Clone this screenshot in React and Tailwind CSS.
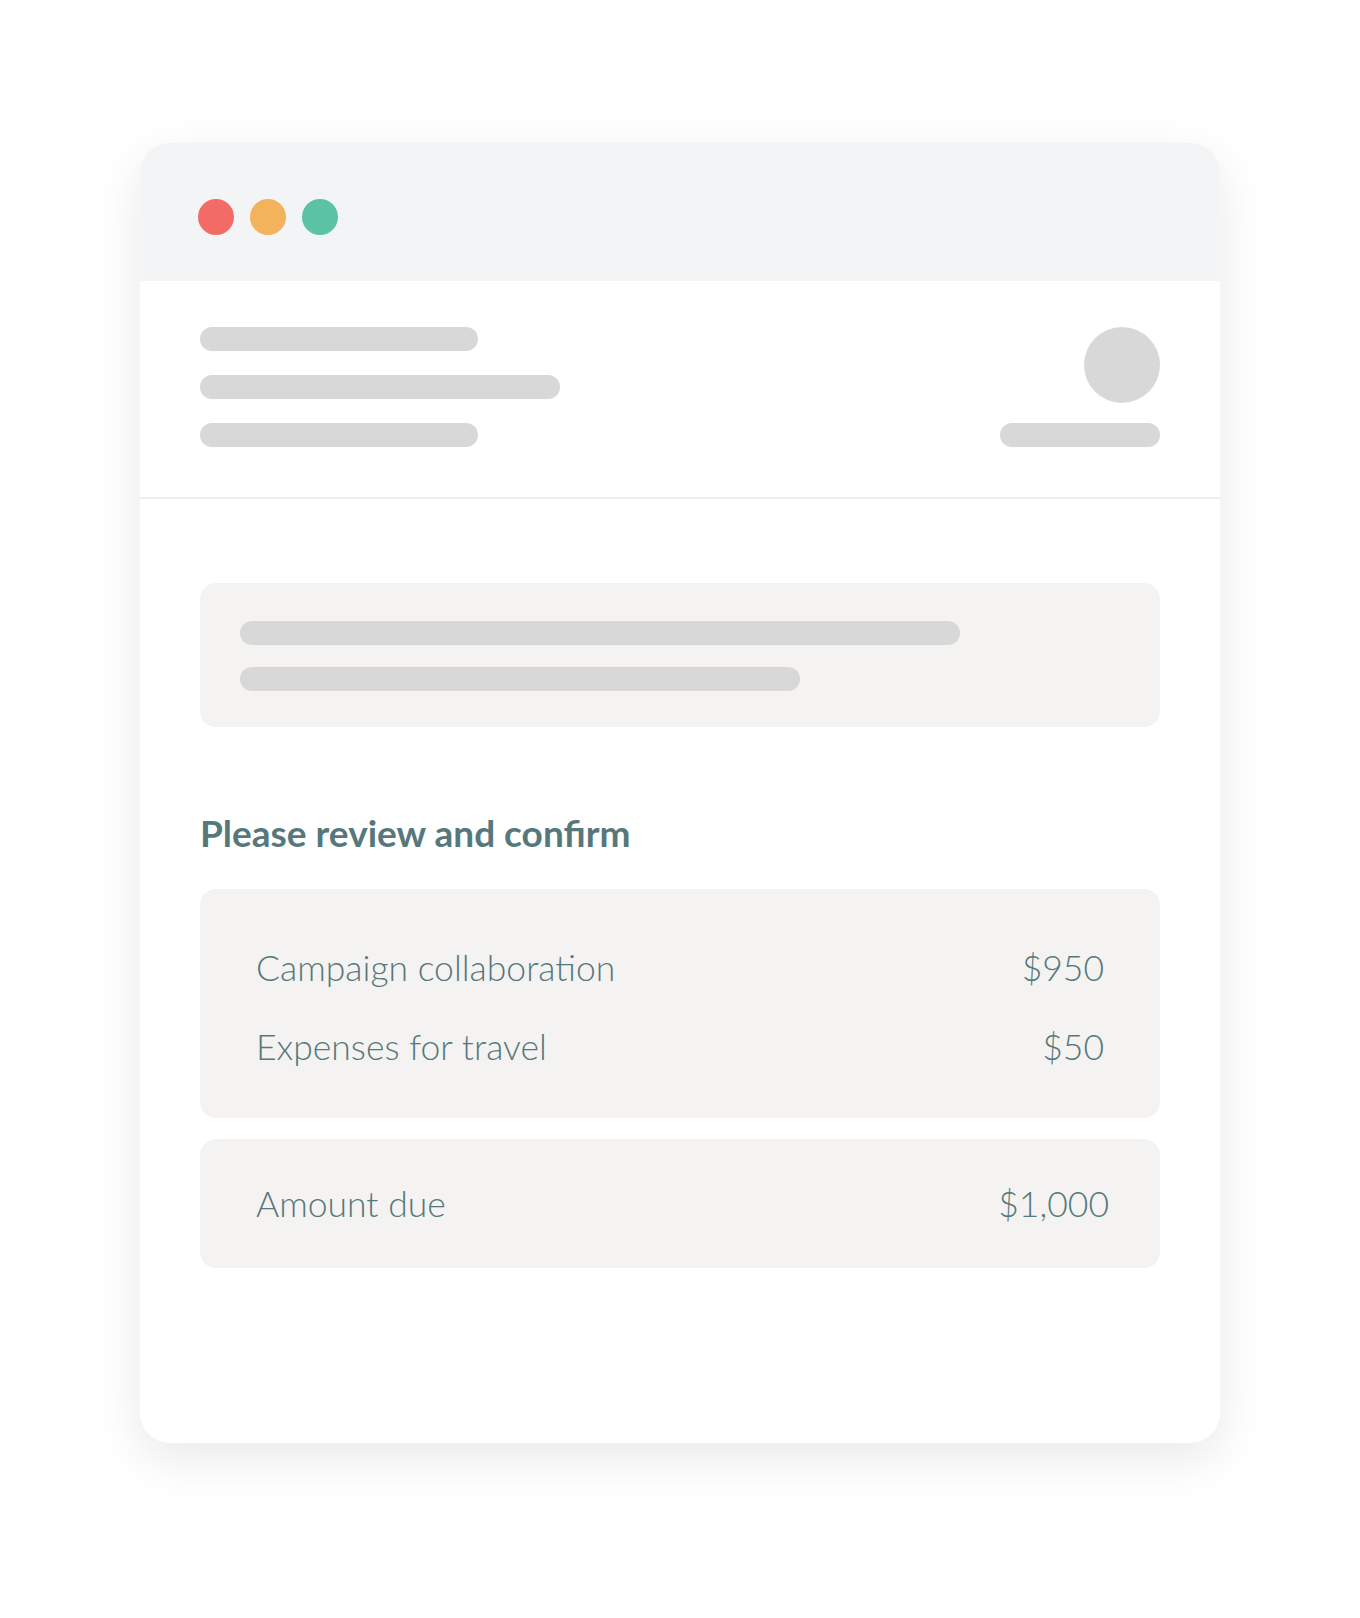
import React from 'react';

const lineItems = [
  { label: 'Campaign collaboration', amount: '$950' },
  { label: 'Expenses for travel', amount: '$50' },
];

function Bar({ className }) {
  return <div className={`h-[24px] rounded-full bg-[#d8d8d8] ${className}`} />;
}

export default function App() {
  return (
    <div className="min-h-[1618px] bg-white px-[140px] pt-[143px] font-['Lato','Liberation_Sans',sans-serif] text-[#57787b]">
      <div className="w-[1080px] overflow-hidden rounded-[30px] bg-white pb-[175px] shadow-[0_16px_50px_rgba(0,0,0,0.09)]">
        {/* Window chrome */}
        <div className="flex h-[138px] gap-[16px] bg-[#f3f4f6] pl-[58px] pt-[56px]">
          <span className="h-[36px] w-[36px] rounded-full bg-[#f26b65]" />
          <span className="h-[36px] w-[36px] rounded-full bg-[#f2b35c]" />
          <span className="h-[36px] w-[36px] rounded-full bg-[#5bc2a5]" />
        </div>

        {/* Header placeholder */}
        <div className="flex justify-between border-b-2 border-[#ededed] px-[60px] pb-[50px] pt-[46px]">
          <div className="flex flex-col gap-[24px]">
            <Bar className="w-[278px]" />
            <Bar className="w-[360px]" />
            <Bar className="w-[278px]" />
          </div>
          <div className="flex flex-col items-end gap-[20px]">
            <div className="h-[76px] w-[76px] rounded-full bg-[#d8d8d8]" />
            <Bar className="w-[160px]" />
          </div>
        </div>

        <div className="px-[60px] pt-[84px]">
          {/* Message placeholder */}
          <div className="flex h-[144px] flex-col gap-[22px] rounded-[16px] bg-[#f4f3f2] px-[40px] pt-[38px]">
            <Bar className="w-[720px]" />
            <Bar className="w-[560px]" />
          </div>

          <h2 className="mt-[86px] text-[37px] font-bold leading-[40px]">Please review and confirm</h2>

          <div className="mt-[36px] flex flex-col gap-[37px] rounded-[16px] bg-[#f4f3f2] px-[56px] pb-[50px] pt-[58px]">
            {lineItems.map(item => (
              <div key={item.label} className="flex items-center justify-between text-[35.5px] font-light leading-[42px]">
                <span>{item.label}</span>
                <span>{item.amount}</span>
              </div>
            ))}
          </div>

          <div className="mt-[21px] flex h-[129px] items-center justify-between rounded-[16px] bg-[#f4f3f2] pl-[56px] pr-[51px] text-[35.5px] font-light">
            <span>Amount due</span>
            <span>$1,000</span>
          </div>
        </div>
      </div>
    </div>
  );
}
